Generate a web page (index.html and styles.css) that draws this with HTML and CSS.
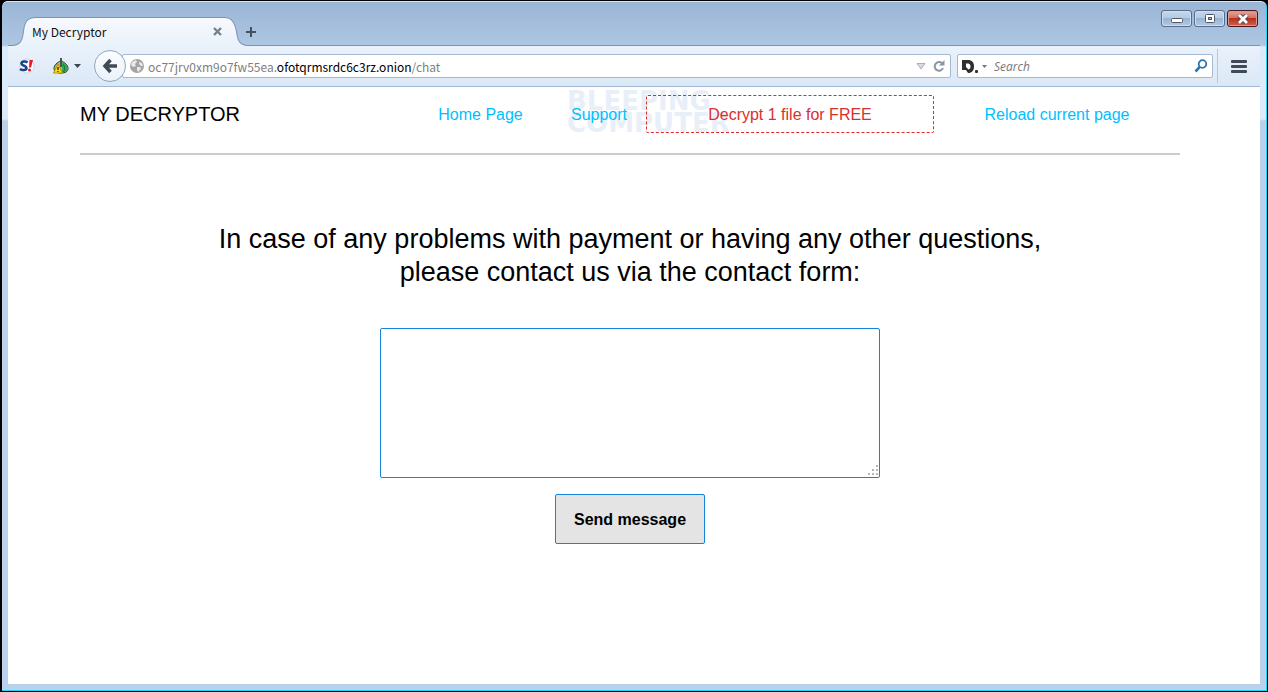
FILE: index.html
```
<!DOCTYPE html>
<html lang="en">
<head>
  <meta charset="utf-8">
  <title>My Decryptor</title>
  <link rel="stylesheet" href="styles.css">
</head>
<body>
  <div class="window">
    <div class="titlebar">
      <div class="tab">
        <svg class="tab-shape" viewBox="0 0 228 29" preserveAspectRatio="none">
          <defs>
            <linearGradient id="tabFill" x1="0" y1="0" x2="0" y2="1">
              <stop offset="0" stop-color="#f7f9fd"/>
              <stop offset="1" stop-color="#eaf2fb"/>
            </linearGradient>
          </defs>
          <path d="M0 29 V28.500 C8 28 10 24 11 15 C12 5 15 .5 23 .5 H205 C212 .5 215 5 217 15 C218 24 220 28 228 28.500 V29 Z" fill="url(#tabFill)"/>
          <path d="M0 28.500 C8 28 10 24 11 15 C12 5 15 .5 23 .5 H205 C212 .5 215 5 217 15 C218 24 220 28 228 28.500" fill="none" stroke="#7b93b5"/>
        </svg>
        <span class="tab-title">My Decryptor</span>
        <button class="icon-btn tab-close" aria-label="Close tab">
          <svg width="9" height="9" viewBox="0 0 9 9"><path d="M1 1 L8 8 M8 1 L1 8" stroke="#73828f" stroke-width="2.400"/></svg>
        </button>
      </div>
      <button class="icon-btn new-tab" aria-label="New tab">
        <svg width="12" height="12" viewBox="0 0 12 12"><path d="M6 1 V11 M1 6 H11" stroke="#45505c" stroke-width="2"/></svg>
      </button>
      <div class="win-buttons">
        <button class="win-btn" aria-label="Minimize">
          <svg width="12" height="10" viewBox="0 0 12 10"><rect x=".5" y="4.500" width="11" height="4" rx="1" fill="#fff" stroke="#535666"/></svg>
        </button>
        <button class="win-btn" aria-label="Maximize">
          <svg width="12" height="10" viewBox="0 0 12 10"><rect x="1.500" y=".5" width="9" height="8" rx="1" fill="#fff" stroke="#535666"/><rect x="4.500" y="3.500" width="3" height="2" fill="#9db8d8" stroke="#535666"/></svg>
        </button>
        <button class="win-btn win-close" aria-label="Close">
          <svg width="12" height="10" viewBox="0 0 12 10"><path d="M2 1 L10 9 M10 1 L2 9" stroke="#5d4650" stroke-width="4.800"/><path d="M2 1 L10 9 M10 1 L2 9" stroke="#fff" stroke-width="2.800"/></svg>
        </button>
      </div>
    </div>

    <div class="toolbar">
      <button class="icon-btn noscript" aria-label="NoScript">
        <svg width="18" height="16" viewBox="0 0 18 16">
          <circle cx="9" cy="8" r="7" fill="#fff" stroke="#cfd8e2"/>
          <path d="M9.500 4.500 C8 3 3.500 3 3.500 5.500 C3.500 8 8.500 7.500 8.500 10 C8.500 12.500 4 12.500 2 11" fill="none" stroke="#1c4587" stroke-width="2.600"/>
          <path d="M11.500 2 H15 L13 9.500 H11 Z" fill="#e8182a"/>
          <circle cx="11.500" cy="12" r="1.500" fill="#e8182a"/>
        </svg>
      </button>
      <button class="icon-btn torbutton" aria-label="Tor">
        <svg width="16" height="16" viewBox="0 0 16 16">
          <path d="M8 2.500 C12 5 15 7 15 10.500 C15 13.500 12.500 15 8 15 C3.500 15 1 13.500 1 10.500 C1 7 4 5 8 2.500 Z" fill="#b9ba8c" stroke="#26301f"/>
          <path d="M9 4 C12 5 14.500 7 14.500 10.500 C14.500 13.500 12 14.500 9 14.500 Z" fill="#35a853"/>
          <path d="M8 0 V9" fill="none" stroke="#4c554c" stroke-width="2"/>
          <path d="M10.500 6.500 C12 9 12 12 10.500 14" fill="none" stroke="#1f6f36"/>
          <path d="M5 6 L9.500 15 H.5 Z" fill="#fddc12" stroke="#a08405" stroke-width=".8"/>
          <path d="M5 9 V12 M5 13 V14" stroke="#111" stroke-width="1.200"/>
        </svg>
        <svg width="7" height="4" viewBox="0 0 7 4"><path d="M0 0 H7 L3.500 4 Z" fill="#3b4754"/></svg>
      </button>

      <div class="address">
        <button class="icon-btn back" aria-label="Back">
          <svg width="16" height="16" viewBox="0 0 16 16"><path d="M8.500 2 L3 8 L8.500 14 M3 8 H15" fill="none" stroke="#3f4b57" stroke-width="3.500"/></svg>
        </button>
        <div class="urlbar">
          <svg width="14" height="14" viewBox="0 0 14 14">
            <circle cx="7" cy="7" r="7" fill="#a4a4a4"/>
            <path d="M2 3 L6 1 L7 3 L5 5 L6 7 L3 8 L1 6 Z M9 3 L12 4 L13 7 L11 7 L9 5 Z M7 8 L10 8 L11 10 L8 13 L7 11 Z" fill="#e9e9e9"/>
          </svg>
          <span class="url">oc77jrv0xm9o7fw55ea.<b>ofotqrmsrdc6c3rz.onion</b>/chat</span>
          <svg width="10" height="7" viewBox="0 0 10 7"><path d="M1 .5 H9 L5 6 Z" fill="#d6dbe0" stroke="#a8b2bc"/></svg>
          <button class="icon-btn" aria-label="Reload">
            <svg width="12" height="12" viewBox="0 0 12 12"><path d="M9 3.300 A4.300 4.300 0 1 0 10 8" fill="none" stroke="#8996a3" stroke-width="2"/><path d="M11.500 0 V5.500 H6 Z" fill="#8996a3"/></svg>
          </button>
        </div>
      </div>

      <div class="searchbar">
        <svg width="17" height="15" viewBox="0 0 17 15"><path d="M0 1 H6 C10 1 12 3.500 12 7.500 C12 11.500 10 14 6 14 L4 11 H0 Z M4 4.500 V8 L6.500 10.500 C8 10 8.500 9 8.500 7.500 C8.500 5.500 7.500 4.500 6 4.500 Z" fill="#2f2f2f" fill-rule="evenodd"/><rect x="13" y="11" width="3" height="3" rx="1" fill="#2f2f2f"/></svg>
        <svg width="5" height="3" viewBox="0 0 5 3"><path d="M0 0 H5 L2.500 3 Z" fill="#6d7680"/></svg>
        <input class="search-input" type="text" placeholder="Search" aria-label="Search">
        <button class="icon-btn" aria-label="Go">
          <svg width="14" height="14" viewBox="0 0 14 14"><circle cx="8.500" cy="5" r="3.800" fill="none" stroke="#2f74ad" stroke-width="1.800"/><path d="M5.800 7.800 L1.500 12.500" stroke="#2f74ad" stroke-width="2.600"/></svg>
        </button>
      </div>

      <button class="icon-btn menu" aria-label="Menu">
        <svg width="16" height="13" viewBox="0 0 16 13" fill="#404b57"><rect width="16" height="3" rx="1"/><rect y="5" width="16" height="3" rx="1"/><rect y="10" width="16" height="3" rx="1"/></svg>
      </button>
    </div>

    <div class="page">
      <div class="watermark">BLEEPING<br>COMPUTER</div>
      <header class="header">
        <div class="brand">MY DECRYPTOR</div>
        <a href="#home">Home Page</a>
        <a href="#support">Support</a>
        <a href="#decrypt" class="free">Decrypt 1 file for FREE</a>
        <a href="#reload">Reload current page</a>
      </header>
      <main class="contact">
        <h1>In case of any problems with payment or having any other questions, please contact us via the contact form:</h1>
        <form class="contact-form">
          <textarea class="message" aria-label="Message"></textarea>
          <button type="button" class="send">Send message</button>
        </form>
      </main>
    </div>
  </div>
</body>
</html>
```
FILE: styles.css
```
* {
  box-sizing: border-box;
}

body {
  margin: 0;
  background: #000;
  font-family: "Liberation Sans", Arial, sans-serif;
}

.window {
  display: flex;
  flex-direction: column;
  min-height: 100vh;
  padding: 0 7px 7px 6px;
  border: 1px solid #000;
  border-left-width: 2px;
  border-radius: 7px 7px 0 0;
  background: linear-gradient(#9ab5d5, #adc6e2 44px, #dcebf9 46px, #dcebf9 118px, #b9d1ea 120px);
  box-shadow: inset -1px -1px 0 #25d5ee, inset 0 1px 0 #d9e6f4;
}

.icon-btn {
  display: flex;
  align-items: center;
  padding: 0;
  border: none;
  background: none;
}

/* title bar */

.titlebar {
  display: flex;
  align-items: flex-end;
  height: 45px;
  border-bottom: 1px solid #7b93b5;
}

.tab {
  position: relative;
  display: flex;
  align-items: center;
  justify-content: space-between;
  width: 236px;
  height: 29px;
  margin: 0 0 -1px 4px;
  padding: 0 26px 0 20px;
}

.tab-shape {
  position: absolute;
  left: 0;
  top: 0;
  width: 100%;
  height: 100%;
}

.tab-title,
.tab-close {
  position: relative;
}

.tab-title {
  font: 12px "Noto Sans CJK KR", "Noto Sans", sans-serif;
  color: #111;
}

.new-tab {
  margin: 0 0 7px -3px;
}

.win-buttons {
  display: flex;
  align-self: flex-start;
  gap: 2px;
  margin: 9px 2px 0 auto;
}

.win-btn {
  display: flex;
  align-items: center;
  justify-content: center;
  width: 31px;
  height: 17px;
  padding: 0;
  border: 1px solid #586c8d;
  border-radius: 3px;
  background: linear-gradient(#c5d6ea, #b4cae4 48%, #97b2d2 50%, #b3cae4);
  box-shadow: inset 0 0 0 1px #d0dfef;
}

.win-close {
  border-color: #471622;
  background: linear-gradient(#e3a498, #d3705f 48%, #b9301c 50%, #d1604a);
  box-shadow: inset 0 0 0 1px #dd9a90;
}

/* navigation toolbar */

.toolbar {
  display: flex;
  align-items: center;
  height: 41px;
  padding: 0 13px 0 10px;
  border-bottom: 1px solid #a3b9d3;
  background: linear-gradient(#eaf2fb, #dae8f6);
}

.torbutton {
  gap: 5px;
  margin-left: 17px;
}

.address {
  display: flex;
  flex: 1;
  align-items: center;
  margin-left: 13px;
}

.back {
  z-index: 1;
  justify-content: center;
  width: 32px;
  height: 32px;
  border: 1px solid #8fa7c4;
  border-radius: 50%;
  background: linear-gradient(#fbfdff, #eaf2fa);
}

.urlbar,
.searchbar {
  display: flex;
  align-items: center;
  height: 24px;
  border: 1px solid #a5b8cf;
  border-radius: 2px;
  background: #fff;
}

.urlbar {
  flex: 1;
  gap: 7px;
  margin-left: -4px;
  padding: 0 5px 0 7px;
}

.url {
  flex: 1;
  margin-left: -3px;
  font: 12px "Noto Sans CJK KR", "Noto Sans", sans-serif;
  color: #808080;
}

.url b {
  font-weight: normal;
  color: #000;
}

.searchbar {
  width: 256px;
  gap: 3px;
  margin-left: 6px;
  padding: 0 4px;
}

.search-input {
  flex: 1;
  min-width: 0;
  padding: 0 4px;
  border: none;
  outline: none;
  background: none;
  font: italic 12px "Open Sans", sans-serif;
}

.search-input::placeholder {
  color: #777;
}

.menu {
  height: 34px;
  margin-left: 4px;
  padding-left: 13px;
  border-left: 1px solid #b5c7dc;
}

/* page content */

.page {
  position: relative;
  flex: 1;
  padding: 8px 80px 0 72px;
  background: #fff;
}

.watermark {
  position: absolute;
  top: 3px;
  left: 559px;
  font: bold 26px/22px "DejaVu Sans", sans-serif;
  color: #e8eff9;
}

.header {
  position: relative;
  display: grid;
  grid-template-columns: 329fr 143fr 94fr 288fr 246fr;
  align-items: center;
  padding-bottom: 20px;
  border-bottom: 2px solid #ccc;
  text-align: center;
}

.brand {
  font-size: 20px;
  text-align: left;
}

.header a {
  padding-top: 2px;
  color: #00bfff;
  font-size: 16px;
  line-height: 34px;
  text-decoration: none;
}

.header .free {
  border: 1px dashed #e02a2a;
  border-radius: 2px;
  color: #d9302c;
}

.contact {
  max-width: 900px;
  margin: 0 auto;
  padding-top: 68px;
  text-align: center;
}

.contact h1 {
  margin: 0;
  font-size: 27px;
  font-weight: normal;
  line-height: 33px;
}

.contact-form {
  display: flex;
  flex-direction: column;
  align-items: center;
  gap: 16px;
  margin-top: 39px;
}

.message {
  width: 500px;
  max-width: 100%;
  height: 150px;
  padding: 10px;
  border: 1px solid #1583d8;
  border-radius: 2px;
  font: 16px "Liberation Sans", Arial, sans-serif;
}

/* dotted grip in the corner */
.message::-webkit-resizer {
  background:
    conic-gradient(#b5b5b5 0 0) 12px 3px / 2px 2px no-repeat,
    conic-gradient(#b5b5b5 0 0) 8px 7px / 2px 2px no-repeat,
    conic-gradient(#b5b5b5 0 0) 12px 7px / 2px 2px no-repeat,
    conic-gradient(#b5b5b5 0 0) 4px 11px / 2px 2px no-repeat,
    conic-gradient(#b5b5b5 0 0) 8px 11px / 2px 2px no-repeat,
    conic-gradient(#b5b5b5 0 0) 12px 11px / 2px 2px no-repeat;
}

.send {
  width: 150px;
  height: 50px;
  padding: 2px 0 0;
  border: 1px solid #1583d8;
  border-radius: 2px;
  background: #e4e4e4;
  color: #000;
  font: bold 16px "Liberation Sans", Arial, sans-serif;
}
```
